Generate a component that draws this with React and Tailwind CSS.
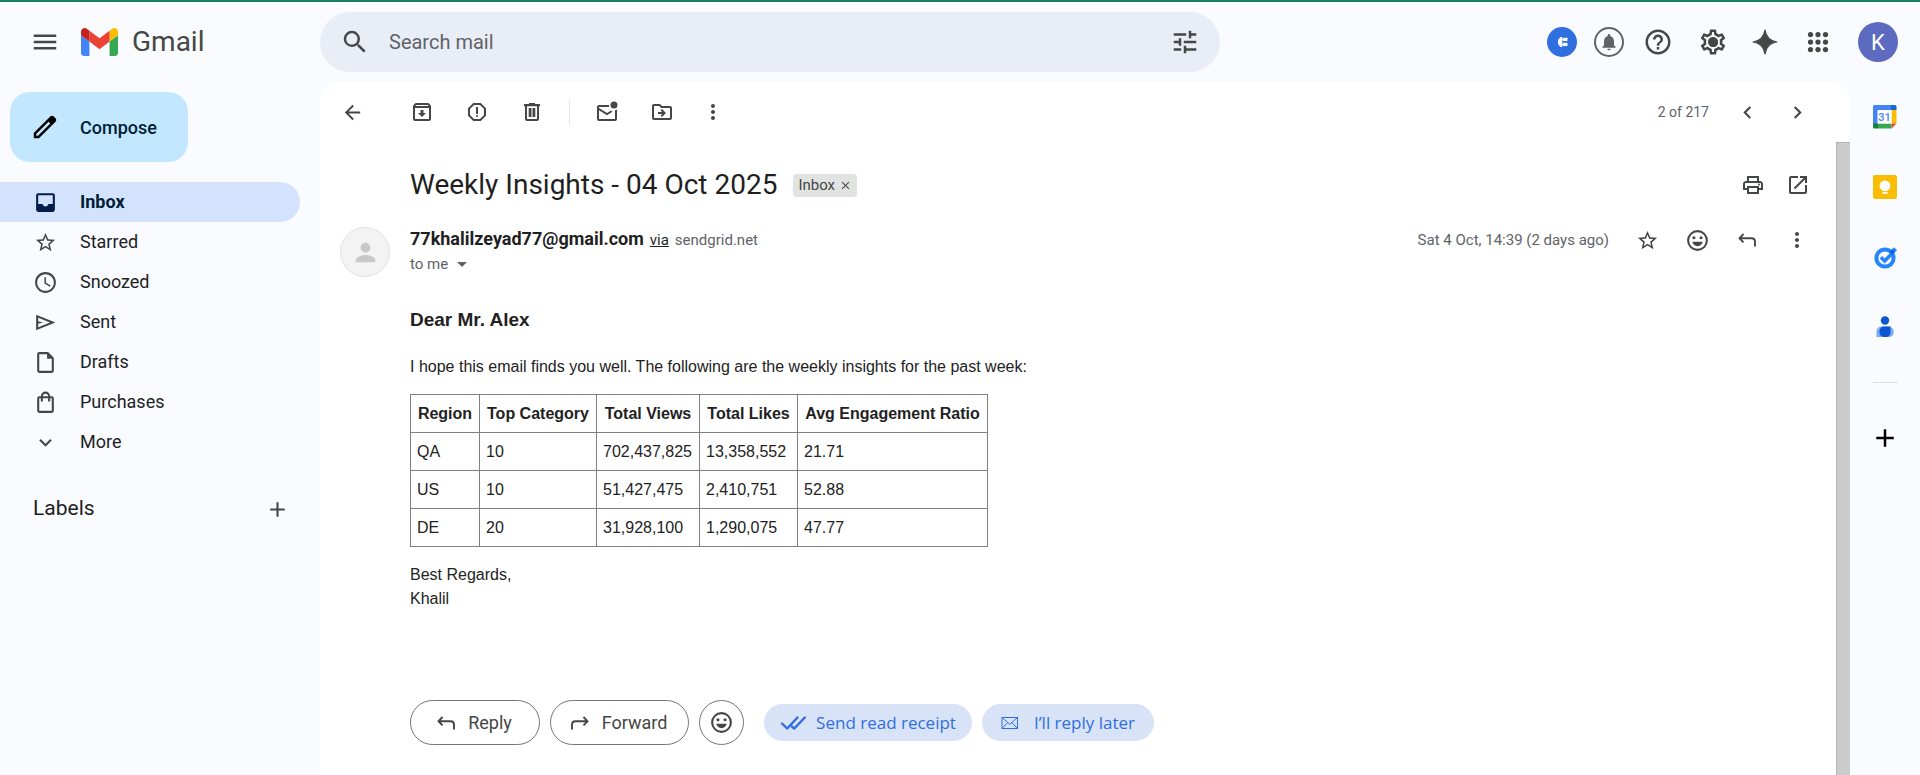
import React from "react";
import {
  MdMenu,
  MdSearch,
  MdTune,
  MdHelpOutline,
  MdOutlineSettings,
  MdNotifications,
  MdArrowBack,
  MdOutlineArchive,
  MdOutlineReport,
  MdOutlineDriveFileMove,
  MdMoreVert,
  MdChevronLeft,
  MdChevronRight,
  MdOutlinePrint,
  MdOpenInNew,
  MdStarBorder,
  MdOutlineSchedule,
  MdKeyboardArrowDown,
  MdAdd,
  MdArrowDropDown,
  MdPerson,
  MdClose,
} from "react-icons/md";

function Svg({ size = 24, children, ...rest }) {
  return (
    <svg width={size} height={size} viewBox="0 0 24 24" fill="currentColor" aria-hidden="true" {...rest}>
      {children}
    </svg>
  );
}

function GmailLogo() {
  return (
    <svg width="37" height="28" viewBox="52 42 88 66" aria-hidden="true">
      <path fill="#4285f4" d="M58 108h14V74L52 59v43c0 3.32 2.69 6 6 6" />
      <path fill="#34a853" d="M120 108h14c3.32 0 6-2.69 6-6V59l-20 15" />
      <path fill="#fbbc04" d="M120 48v26l20-15v-8c0-7.42-8.47-11.65-14.4-7.2" />
      <path fill="#ea4335" d="M72 74V48l24 18 24-18v26L96 92" />
      <path fill="#c5221f" d="M52 51v8l20 15V48l-5.6-4.2c-5.94-4.45-14.4-.22-14.4 7.2" />
    </svg>
  );
}

const PencilIcon = () => (
  <Svg size={30}>
    <path d="M20.41 4.94l-1.35-1.35c-.78-.78-2.05-.78-2.83 0L3 16.82V21h4.18L20.41 7.77c.79-.78.79-2.05 0-2.83zm-14 14.12L5 19v-1.36l9.82-9.82 1.41 1.41-9.82 9.83z" />
  </Svg>
);

const InboxIcon = () => (
  <Svg size={25}>
    <path
      fillRule="evenodd"
      d="M5 3h14a2 2 0 0 1 2 2v14a2 2 0 0 1-2 2H5a2 2 0 0 1-2-2V5c0-1.100.9-2 2-2zm0 2v8.500h4.200c.3 1.400 1.400 2.300 2.800 2.300s2.500-.9 2.800-2.300H19V5z"
    />
  </Svg>
);

const SentIcon = () => (
  <Svg size={25}>
    <path
      fillRule="evenodd"
      d="M3 4.500v15L21.500 12zM5 7.500 16.300 12 5 16.500V13.300L9.500 12 5 10.700z"
    />
  </Svg>
);

const DraftIcon = () => (
  <Svg size={25}>
    <path
      fillRule="evenodd"
      d="M14.500 2H6a2 2 0 0 0-2 2v16a2 2 0 0 0 2 2h12a2 2 0 0 0 2-2V7.500L14.500 2zM18 20H6V4h7.500v4.500H18z"
    />
  </Svg>
);

const BagIcon = () => (
  <Svg size={25}>
    <path
      fillRule="evenodd"
      d="M18 6h-1.500a4.500 4.500 0 0 0-9 0H6a2 2 0 0 0-2 2v12a2 2 0 0 0 2 2h12a2 2 0 0 0 2-2V8a2 2 0 0 0-2-2zm-6-2.500A2.500 2.500 0 0 1 14.500 6h-5A2.500 2.500 0 0 1 12 3.500zM18 20H6V8h1.500v3h2V8h5v3h2V8H18z"
    />
  </Svg>
);

const TrashIcon = () => (
  <Svg>
    <path
      fillRule="evenodd"
      d="M15 4V3H9v1H4v2.200h1V19c0 1.100.9 2 2 2h10c1.100 0 2-.9 2-2V6.200h1V4h-5zm2 15H7V6.200h10V19zM8.700 8h2.800v9H8.700zm3.800 0h2.800v9h-2.800z"
    />
  </Svg>
);

const MailUnreadIcon = () => (
  <Svg>
    <path d="M20 19V10.200c.7-.1 1.400-.4 2-.8V19a2 2 0 0 1-2 2H4a2 2 0 0 1-2-2V7c0-1.100.9-2 2-2h10.100c-.1.700-.1 1.300 0 2H4v1l8 5 4-2.500c.4.500 1 .9 1.600 1.200L12 15.300l-8-5V19z" />
    <circle cx="19" cy="5" r="3.500" />
  </Svg>
);

const SmileIcon = ({ size = 25 }) => (
  <Svg size={size}>
    <circle cx="12" cy="12" r="9" fill="none" stroke="currentColor" strokeWidth="2" />
    <circle cx="8.600" cy="9.400" r="1.500" />
    <circle cx="15.400" cy="9.400" r="1.500" />
    <path d="M7 13.200h10c-.6 2.500-2.500 4.200-5 4.200s-4.400-1.700-5-4.200z" />
  </Svg>
);

const ReplyIcon = ({ flip = false }) => (
  <Svg className={flip ? "-scale-x-100" : ""}>
    <path
      d="M8.500 6 4.500 10.200l4 4.200M5 10.200H16.500c2.100 0 3.500 1.400 3.500 3.500V18.500"
      fill="none"
      stroke="currentColor"
      strokeWidth="1.900"
    />
  </Svg>
);

const SparkleIcon = () => (
  <Svg size={30}>
    <path d="M12 2.500C12.900 8.300 15.700 11.100 21.500 12 15.700 12.900 12.900 15.700 12 21.500 11.100 15.700 8.300 12.900 2.500 12 8.300 11.100 11.100 8.300 12 2.500z" stroke="currentColor" strokeLinejoin="round" />
  </Svg>
);

const AppsIcon = () => (
  <Svg size={30}>
    {[6, 12, 18].map((y) => [6, 12, 18].map((x) => <circle key={`${x}-${y}`} cx={x} cy={y} r="2.100" />))}
  </Svg>
);

const ConnectIcon = () => (
  <svg width="30" height="30" viewBox="0 0 30 30" aria-hidden="true">
    <circle cx="15" cy="15" r="15" fill="#2f6fe0" />
    <path d="M14.800 10.200v9.600A4.900 4.900 0 0 1 14.800 10.200z" fill="#fff" />
    <rect x="13" y="10.200" width="2.400" height="9.600" fill="#fff" />
    <rect x="16" y="10.700" width="4.500" height="3.300" rx=".6" fill="#fff" />
    <rect x="16" y="15.800" width="4.500" height="3.300" rx=".6" fill="#fff" />
    <path d="M15 12h2v1h-2zM15 17h2v1h-2z" fill="#fff" />
  </svg>
);

const CalendarIcon = () => (
  <svg width="24" height="24" viewBox="0 0 24 24" role="img" aria-label="Calendar">
    <path d="M0 1.500A1.500 1.500 0 0 1 1.500 0H18v5H5v14H0z" fill="#4285f4" />
    <path d="M18 0h4A1.500 1.500 0 0 1 23.500 1.500V5H18z" fill="#1967d2" />
    <path d="M18.500 5h5v13.500h-5z" fill="#fbbc04" />
    <path d="M5 18.500h13.500v5H5z" fill="#34a853" />
    <path d="M0 18.500h5v5H1.500A1.500 1.500 0 0 1 0 22z" fill="#188038" />
    <path d="M18.500 18.500h5l-5 5z" fill="#ea4335" />
    <path d="M4.500 5h14v13.500h-14z" fill="#fff" />
    <text x="11.500" y="15.800" textAnchor="middle" fontSize="11" fontWeight="500" fontFamily="Roboto, sans-serif" fill="#4285f4">
      31
    </text>
  </svg>
);

const KeepIcon = () => (
  <svg width="24" height="24" viewBox="0 0 24 24" aria-hidden="true">
    <rect width="24" height="24" rx="2" fill="#fbbc04" />
    <circle cx="12" cy="10.800" r="5.400" fill="#fff" />
    <path d="M9.500 14h5v2h-5zM9.500 17h5v1.800h-5z" fill="#fff" />
  </svg>
);

const TasksIcon = () => (
  <svg width="24" height="24" viewBox="0 0 24 24" aria-hidden="true">
    <circle cx="12" cy="13" r="8.600" fill="none" stroke="#2684fc" strokeWidth="4" />
    <path d="m8 12.300 3.600 3.600 8-8" fill="none" stroke="#2684fc" strokeWidth="3.600" />
    <path d="m17.500 8.800 5-5" stroke="#2684fc" strokeWidth="4.200" />
    <path d="m16.500 6.500 2.800-2.200 2.500 2.600-2.800 2.900z" fill="#0066da" />
  </svg>
);

const ContactsIcon = () => (
  <svg width="24" height="24" viewBox="0 0 24 24" aria-hidden="true">
    <circle cx="12" cy="5.500" r="4.200" fill="#0b57d0" />
    <path d="M3.500 22v-5.500A5 5 0 0 1 8.500 11.500h7.200a5 5 0 0 1 5 5v1A4.500 4.500 0 0 1 16.200 22z" fill="#7baaf7" />
    <path d="M6.500 16a4.500 4.500 0 0 1 4.500-4.500h6.500V17.500A4.500 4.500 0 0 1 13 22h-2a4.500 4.500 0 0 1-4.500-4.500z" fill="#0b57d0" />
  </svg>
);

const DoubleCheckIcon = () => (
  <svg width="26" height="16" viewBox="0 0 26 16" fill="none" stroke="#2f6fe0" strokeWidth="2.400" strokeLinecap="round" strokeLinejoin="round" aria-hidden="true">
    <path d="M2 8.500 7.200 13.500 17.500 2.500" />
    <path d="M11.800 11.500 14.300 13.500 24.800 2.500" />
  </svg>
);

const EnvelopeIcon = () => (
  <svg width="18" height="14" viewBox="0 0 18 14" fill="none" stroke="#2f6fe0" aria-hidden="true">
    <rect x="1" y="1.500" width="15.500" height="11" />
    <path d="M1.500 2 8.800 8.300 16 2M1.500 12.200 6.500 6.500M16 12.200 11 6.500" />
  </svg>
);

function IconButton({ label, className = "", children }) {
  return (
    <button
      type="button"
      aria-label={label}
      className={"flex size-9 shrink-0 items-center justify-center rounded-full text-[#444746] " + className}
    >
      {children}
    </button>
  );
}

const folders = [
  { name: "Inbox", icon: <InboxIcon />, active: true },
  { name: "Starred", icon: <MdStarBorder size={23} /> },
  { name: "Snoozed", icon: <MdOutlineSchedule size={25} /> },
  { name: "Sent", icon: <SentIcon /> },
  { name: "Drafts", icon: <DraftIcon /> },
  { name: "Purchases", icon: <BagIcon /> },
  { name: "More", icon: <MdKeyboardArrowDown size={25} /> },
];

const columns = [
  { title: "Region", width: "w-[69px]" },
  { title: "Top Category", width: "w-[117px]" },
  { title: "Total Views", width: "w-[103px]" },
  { title: "Total Likes", width: "w-[98px]" },
  { title: "Avg Engagement Ratio", width: "w-[190px]" },
];

const rows = [
  ["QA", "10", "702,437,825", "13,358,552", "21.71"],
  ["US", "10", "51,427,475", "2,410,751", "52.88"],
  ["DE", "20", "31,928,100", "1,290,075", "47.77"],
];

function Header() {
  return (
    <header className="flex h-20 items-center">
      <div className="flex w-80 shrink-0 items-center pl-[27px]">
        <IconButton label="Main menu">
          <MdMenu size={30} />
        </IconButton>
        <a href="#inbox" className="ml-[18px] flex items-center gap-[14px] text-[28px] text-[#444746]">
          <GmailLogo />
          Gmail
        </a>
      </div>
      <form className="flex h-[60px] w-[900px] items-center rounded-full bg-[#e9eef6] px-[17px]">
        <IconButton label="Search">
          <MdSearch size={30} />
        </IconButton>
        <input
          type="text"
          aria-label="Search mail"
          placeholder="Search mail"
          className="ml-4 min-w-0 flex-1 bg-transparent text-[20px] text-[#444746] outline-none placeholder:text-[#5f6368]"
        />
        <IconButton label="Show search options">
          <MdTune size={30} />
        </IconButton>
      </form>
      <div className="ml-auto flex items-center pr-[22px] text-[#444746]">
        <button type="button" aria-label="Extension">
          <ConnectIcon />
        </button>
        <button
          type="button"
          aria-label="Notifications"
          className="ml-[17px] flex size-[30px] items-center justify-center rounded-full border-2 border-[#5f6368] text-[#5f6368]"
        >
          <MdNotifications size={20} className="shrink-0" />
        </button>
        <IconButton label="Support" className="ml-4">
          <MdHelpOutline size={30} />
        </IconButton>
        <IconButton label="Settings" className="relative ml-[19px]">
          <MdOutlineSettings size={30} />
          <span className="absolute size-[9px] rounded-full bg-[#444746]" />
        </IconButton>
        <IconButton label="Assistant" className="ml-4">
          <SparkleIcon />
        </IconButton>
        <IconButton label="Google apps" className="ml-[17px]">
          <AppsIcon />
        </IconButton>
        <button
          type="button"
          aria-label="Account"
          className="ml-[22px] flex size-10 items-center justify-center rounded-full bg-[#5c6bc0] text-[22px] text-white"
        >
          K
        </button>
      </div>
    </header>
  );
}

function Sidebar() {
  return (
    <aside className="w-80 shrink-0 pt-[10px]">
      <button
        type="button"
        className="ml-[10px] flex h-[70px] w-[178px] items-center gap-5 rounded-[20px] bg-[#c2e7ff] pl-5 text-[18px] font-medium text-[#001d35]"
      >
        <span className="text-black">
          <PencilIcon />
        </span>
        Compose
      </button>
      <nav className="mt-5 w-[300px]">
        {folders.map((f) => (
          <a
            key={f.name}
            href="#folder"
            className={
              "flex h-10 items-center rounded-r-full pl-[30px] text-[18px] " +
              (f.active ? "bg-[#d3e3fd] font-bold text-[#001d35]" : "text-[#1f1f1f]")
            }
          >
            <span className={"flex w-[30px] justify-center " + (f.active ? "text-[#041e49]" : "text-[#444746]")}>
              {f.icon}
            </span>
            <span className="ml-5 pb-0.5">{f.name}</span>
          </a>
        ))}
      </nav>
      <div className="mt-[29px] flex h-9 w-[300px] items-center justify-between pr-[5px] pl-[33px]">
        <h2 className="text-[21px] text-[#1f1f1f]">Labels</h2>
        <IconButton label="Create new label">
          <MdAdd size={25} />
        </IconButton>
      </div>
    </aside>
  );
}

function Toolbar() {
  return (
    <div className="flex h-[60px] items-center pr-[35px] pl-[14px]">
      <IconButton label="Back to Inbox">
        <MdArrowBack size={23} />
      </IconButton>
      <div className="ml-[34px] flex items-center gap-[19px]">
        <IconButton label="Archive">
          <MdOutlineArchive size={24} />
        </IconButton>
        <IconButton label="Report spam">
          <MdOutlineReport size={24} />
        </IconButton>
        <IconButton label="Delete">
          <TrashIcon />
        </IconButton>
        <span className="h-[25px] w-px bg-[#e0e3e7]" />
        <IconButton label="Mark as unread">
          <MailUnreadIcon />
        </IconButton>
        <IconButton label="Move to">
          <MdOutlineDriveFileMove size={24} />
        </IconButton>
        <IconButton label="More options" className="-ml-1">
          <MdMoreVert size={24} />
        </IconButton>
      </div>
      <span className="ml-auto text-sm text-[#5f6368]">2 of 217</span>
      <IconButton label="Newer" className="ml-5">
        <MdChevronLeft size={25} />
      </IconButton>
      <IconButton label="Older" className="ml-[14px]">
        <MdChevronRight size={25} />
      </IconButton>
    </div>
  );
}

function Message() {
  return (
    <article className="min-w-0 flex-1 pt-[23px] pl-5">
      <div className="flex h-10 items-center pr-5 pl-[70px]">
        <h1 className="text-[28px] text-[#1f1f1f]">Weekly Insights - 04 Oct 2025</h1>
        <span className="ml-4 flex h-[23px] items-center gap-1 rounded bg-[#e1e3e1] px-[5px] text-[15px] text-[#444746]">
          Inbox
          <button type="button" aria-label="Remove label Inbox">
            <MdClose size={13} />
          </button>
        </span>
        <IconButton label="Print all" className="ml-auto">
          <MdOutlinePrint size={24} />
        </IconButton>
        <IconButton label="Open in new window" className="ml-[9px]">
          <MdOpenInNew size={24} />
        </IconButton>
      </div>

      <div className="mt-[22px] flex items-start pr-[21px]">
        <span className="flex size-[50px] shrink-0 items-center justify-center rounded-full border border-[#e0e0e0] bg-[#f3f3f3] text-[#c8c8c8]">
          <MdPerson size={29} />
        </span>
        <div className="ml-5 text-[15px] leading-6 text-[#5f6368]">
          <div className="flex items-baseline gap-[6px] whitespace-nowrap">
            <span className="text-[18px] font-bold text-[#1f1f1f]">77khalilzeyad77@gmail.com</span>
            <a href="#via" className="text-[#1f1f1f] underline">
              via
            </a>
            <span>sendgrid.net</span>
          </div>
          <button type="button" className="flex items-center gap-[2px]">
            to me <MdArrowDropDown size={24} />
          </button>
        </div>
        <div className="ml-auto flex h-[26px] items-center gap-[14px]">
          <span className="mr-[6px] text-[15px] text-[#5f6368]">Sat 4 Oct, 14:39 (2 days ago)</span>
          <IconButton label="Star">
            <MdStarBorder size={23} />
          </IconButton>
          <IconButton label="Add reaction">
            <SmileIcon />
          </IconButton>
          <IconButton label="Reply">
            <ReplyIcon />
          </IconButton>
          <IconButton label="More">
            <MdMoreVert size={24} />
          </IconButton>
        </div>
      </div>

      <div className="pl-[70px]">
        <div className="pt-[31px] font-['Liberation_Sans',Arial,sans-serif] text-[16px] leading-6 text-[#222222]">
          <h3 className="text-[19px] font-bold">Dear Mr. Alex</h3>
          <p className="mt-[23px]">I hope this email finds you well. The following are the weekly insights for the past week:</p>
          <table className="mt-[15px] table-fixed border-collapse">
            <thead>
              <tr className="h-[38px]">
                {columns.map((c) => (
                  <th key={c.title} className={"border border-[#808080] text-center font-bold whitespace-nowrap " + c.width}>
                    {c.title}
                  </th>
                ))}
              </tr>
            </thead>
            <tbody>
              {rows.map((r) => (
                <tr key={r[0]} className="h-[38px]">
                  {r.map((cell, i) => (
                    <td key={i} className="border border-[#808080] px-[6px]">
                      {cell}
                    </td>
                  ))}
                </tr>
              ))}
            </tbody>
          </table>
          <p className="mt-4">
            Best Regards,
            <br />
            Khalil
          </p>
        </div>

        <div className="mt-[89px] flex items-center gap-[10px] pb-[30px] text-[18px] text-[#444746]">
          <button type="button" className="flex h-[45px] w-[130px] items-center justify-center gap-[10px] rounded-full border border-[#747775] pr-1">
            <ReplyIcon />
            Reply
          </button>
          <button type="button" className="flex h-[45px] w-[139px] items-center justify-center gap-[10px] rounded-full border border-[#747775] pr-1">
            <ReplyIcon flip />
            Forward
          </button>
          <button
            type="button"
            aria-label="Add reaction"
            className="flex size-[45px] items-center justify-center rounded-full border border-[#747775]"
          >
            <SmileIcon />
          </button>
          <button
            type="button"
            className="ml-[10px] flex h-[37px] w-[208px] items-center justify-center gap-[10px] rounded-full bg-[#d8e3f8] font-['Open_Sans',sans-serif] text-[17px] whitespace-nowrap text-[#2f6fe0]"
          >
            <DoubleCheckIcon />
            Send read receipt
          </button>
          <button
            type="button"
            className="flex h-[37px] w-[172px] items-center justify-center gap-[15px] rounded-full bg-[#d8e3f8] font-['Open_Sans',sans-serif] text-[17px] whitespace-nowrap text-[#2f6fe0]"
          >
            <EnvelopeIcon />
            I’ll reply later
          </button>
        </div>
      </div>
    </article>
  );
}

function SidePanel() {
  return (
    <aside className="flex w-[70px] shrink-0 flex-col items-center pt-[17px]">
      <div className="flex flex-col gap-[34px]">
        <IconButton label="Calendar">
          <CalendarIcon />
        </IconButton>
        <IconButton label="Keep">
          <KeepIcon />
        </IconButton>
        <IconButton label="Tasks">
          <TasksIcon />
        </IconButton>
        <IconButton label="Contacts">
          <ContactsIcon />
        </IconButton>
      </div>
      <hr className="mt-[37px] w-[25px] border-[#dcdfdc]" />
      <IconButton label="Get add-ons" className="mt-[37px]">
        <MdAdd size={30} className="text-black" />
      </IconButton>
    </aside>
  );
}

export default function App() {
  return (
    <div className="flex min-h-screen flex-col border-t-2 border-[#1a7f64] bg-[#f9fbff] font-[Roboto,sans-serif]">
      <Header />
      <div className="flex flex-1">
        <Sidebar />
        <main className="flex min-w-0 flex-1 flex-col rounded-t-[20px] bg-white">
          <Toolbar />
          <div className="flex flex-1">
            <Message />
            <div className="w-[14px] shrink-0 border-t border-l border-[#b3b3b3] bg-[#cbcbcb]" />
          </div>
        </main>
        <SidePanel />
      </div>
    </div>
  );
}
